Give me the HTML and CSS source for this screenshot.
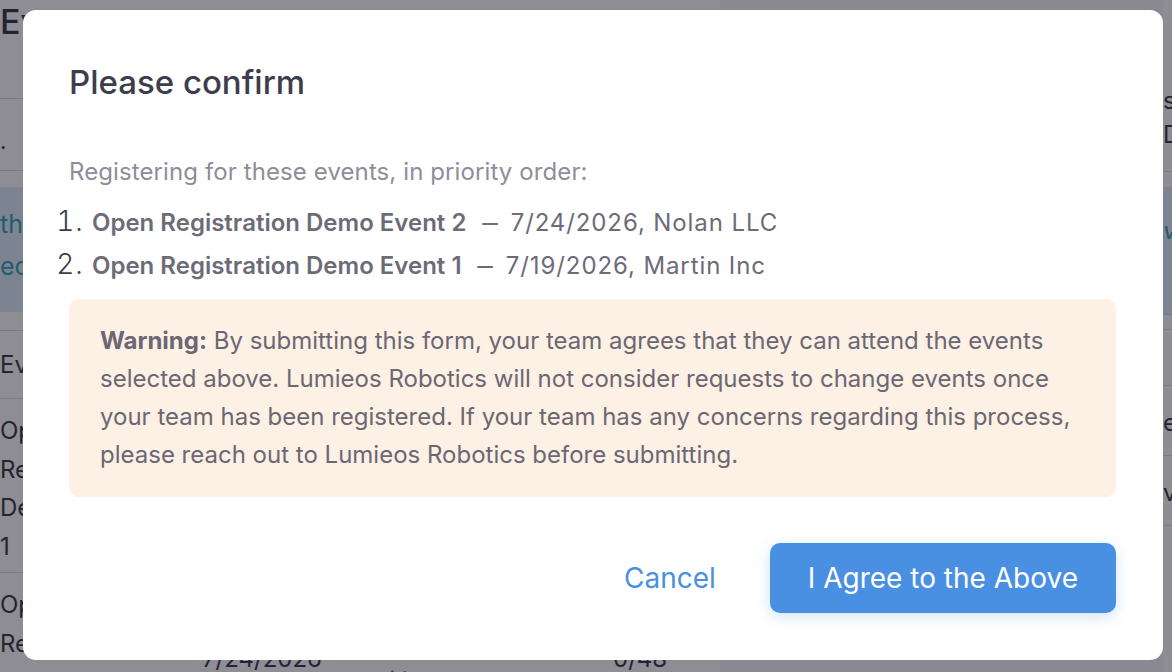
FILE: index.html
```html
<!DOCTYPE html>
<html lang="en">
<head>
<meta charset="utf-8">
<title>Events</title>
<link rel="stylesheet" href="styles.css">
</head>
<body>
<div class="page">
  <section class="main">
    <h1 class="page-title">Events</h1>
    <div class="filter-row"><span>.</span></div>
    <div class="notice">
      <p>these events are open for registration</p>
      <p>ecosystem partners host each event</p>
    </div>
    <div class="table">
      <div class="thead">Event</div>
      <div class="tr">
        <div class="name">Open Registration Demo Event 1</div>
        <div class="date">7/19/2026</div>
        <div class="desc">Lorem ipsum dolor sit amet</div>
        <div class="count">0/32</div>
      </div>
      <div class="tr">
        <div class="name">Open Registration Demo Event 2</div>
        <div class="date">7/24/2026</div>
        <div class="desc">Fugiat labore ipsum with</div>
        <div class="count">0/48</div>
      </div>
    </div>
  </section>
  <aside class="side">
    <div class="side-head"><p>selected</p><p>Date</p></div>
    <div class="side-band">validate</div>
    <div class="side-row short"></div>
    <div class="side-row">event</div>
    <div class="side-row">venue</div>
    <div class="side-row short"></div>
  </aside>
</div>

<div class="overlay">
  <div class="modal" role="dialog" aria-labelledby="confirm-title">
    <h2 class="modal-title" id="confirm-title">Please confirm</h2>
    <p class="lead">Registering for these events, in priority order:</p>
    <ol class="picks">
      <li><strong>Open Registration Demo Event 2</strong> <span class="sep">—</span> 7/24/2026, Nolan LLC</li>
      <li><strong>Open Registration Demo Event 1</strong> <span class="sep">—</span> 7/19/2026, Martin Inc</li>
    </ol>
    <div class="warning">
      <strong>Warning:</strong> By submitting this form, your team agrees that they can attend the events selected above. Lumieos Robotics will not consider requests to change events once your team has been registered. If your team has any concerns regarding this process, please reach out to Lumieos Robotics before submitting.
    </div>
    <div class="actions">
      <button class="btn-link" type="button">Cancel</button>
      <button class="btn-primary" type="button">I Agree to the Above</button>
    </div>
  </div>
</div>
</body>
</html>
```

FILE: styles.css
```css
* { box-sizing: border-box; }

html, body {
  margin: 0;
  height: 100%;
  overflow: hidden;
}

body {
  font-family: Inter, "Noto Sans", sans-serif;
  background: #f6f6f9;
  color: #2c2b38;
}

p { margin: 0; }

/* ---------- page behind the dialog ---------- */
.page {
  display: flex;
  width: 1500px;
}

.main {
  width: 720px;
  flex: none;
  background: #fff;
}

.page-title {
  margin: 0;
  font-size: 34px;
  font-weight: 500;
  line-height: 44px;
  padding-bottom: 54px;
  border-bottom: 1px solid #d4d4dc;
}

.filter-row {
  height: 72px;
  font-size: 22px;
  line-height: 72px;
  border-bottom: 1px solid #d4d4dc;
  padding-top: 6px;
}

.notice {
  margin-top: 16px;
  height: 125px;
  padding-top: 16px;
  background: #dcedf8;
  color: #2a9ab7;
  font-size: 25px;
  line-height: 42px;
}

.table {
  margin-top: 18px;
  border-top: 1px solid #d4d4dc;
}

.thead {
  height: 68px;
  font-size: 24px;
  line-height: 68px;
  border-bottom: 1px solid #d4d4dc;
}

.tr {
  display: grid;
  grid-template-columns: 202px 168px 243px 1fr;
  align-items: center;
  border-bottom: 1px solid #d4d4dc;
  font-size: 24px;
  line-height: 38.5px;
}

.tr .name {
  width: 150px;
  padding: 13px 0 6px;
}

.tr .desc {
  color: #6e6d7a;
  font-style: italic;
  font-size: 22px;
}

.side {
  margin-left: 443px;
  width: 260px;
  flex: none;
  font-size: 24px;
  line-height: 34px;
  background: #fff;
}

.side-head {
  height: 172px;
  padding-top: 84px;
  border-bottom: 1px solid #d4d4dc;
}

.side-band {
  margin-top: 15px;
  height: 128px;
  padding-top: 27px;
  background: #dcedf8;
  color: #2a9ab7;
  font-style: italic;
  border-bottom: 1px solid #d4d4dc;
  margin-bottom: 14px;
}

.side-row {
  height: 70px;
  padding-top: 20px;
  border-top: 1px solid #d4d4dc;
}

.side-row.short { height: 56px; }

/* ---------- dialog ---------- */
.overlay {
  position: fixed;
  inset: 0;
  background: rgba(29, 27, 41, 0.5);
  display: flex;
  padding: 10px 9px 12px 23px;
}

.modal {
  flex: 1;
  background: #fff;
  border-radius: 13px;
  padding: 52px 47px 47px 46px;
  display: flex;
  flex-direction: column;
  font-size: 24px;
}

.modal-title {
  margin: 0 0 51px;
  font-size: 33px;
  line-height: 40px;
  font-weight: 500;
  color: #3e3d4d;
}

.lead {
  line-height: 38px;
  letter-spacing: 0.1px;
  color: #8f8d99;
}

.picks {
  margin: 9px 0 13px;
  padding-left: 23px;
  line-height: 43px;
  letter-spacing: 0.9px;
  color: #6d6b78;
}

.picks li {
  height: 43px;
}

.picks li::marker {
  font-size: 28px;
  font-weight: 300;
  color: #3e3d4d;
}

.picks strong {
  font-weight: 600;
  letter-spacing: 0;
}

/* narrow dash between the event name and its details */
.picks .sep {
  display: inline-block;
  margin: 0 1px 0 4px;
  letter-spacing: 0;
  transform: scaleX(0.65);
}

.warning {
  background: #fdf0e4;
  border-radius: 10px;
  padding: 23px 31px;
  line-height: 38px;
  color: #6b6773;
}

.warning strong { font-weight: 700; }

.actions {
  margin-top: auto;
  display: flex;
  justify-content: flex-end;
  align-items: center;
  gap: 30px;
}

.actions button {
  font-family: inherit;
  font-size: 28px;
  border: 0;
  cursor: pointer;
}

.btn-link {
  background: none;
  color: #4a90e2;
  padding: 0 24px;
}

.btn-primary {
  height: 70px;
  padding: 0 38px;
  border-radius: 10px;
  background: #4a90e2;
  color: #fff;
  box-shadow: 0 4px 14px rgba(74, 144, 226, 0.25);
}
```
